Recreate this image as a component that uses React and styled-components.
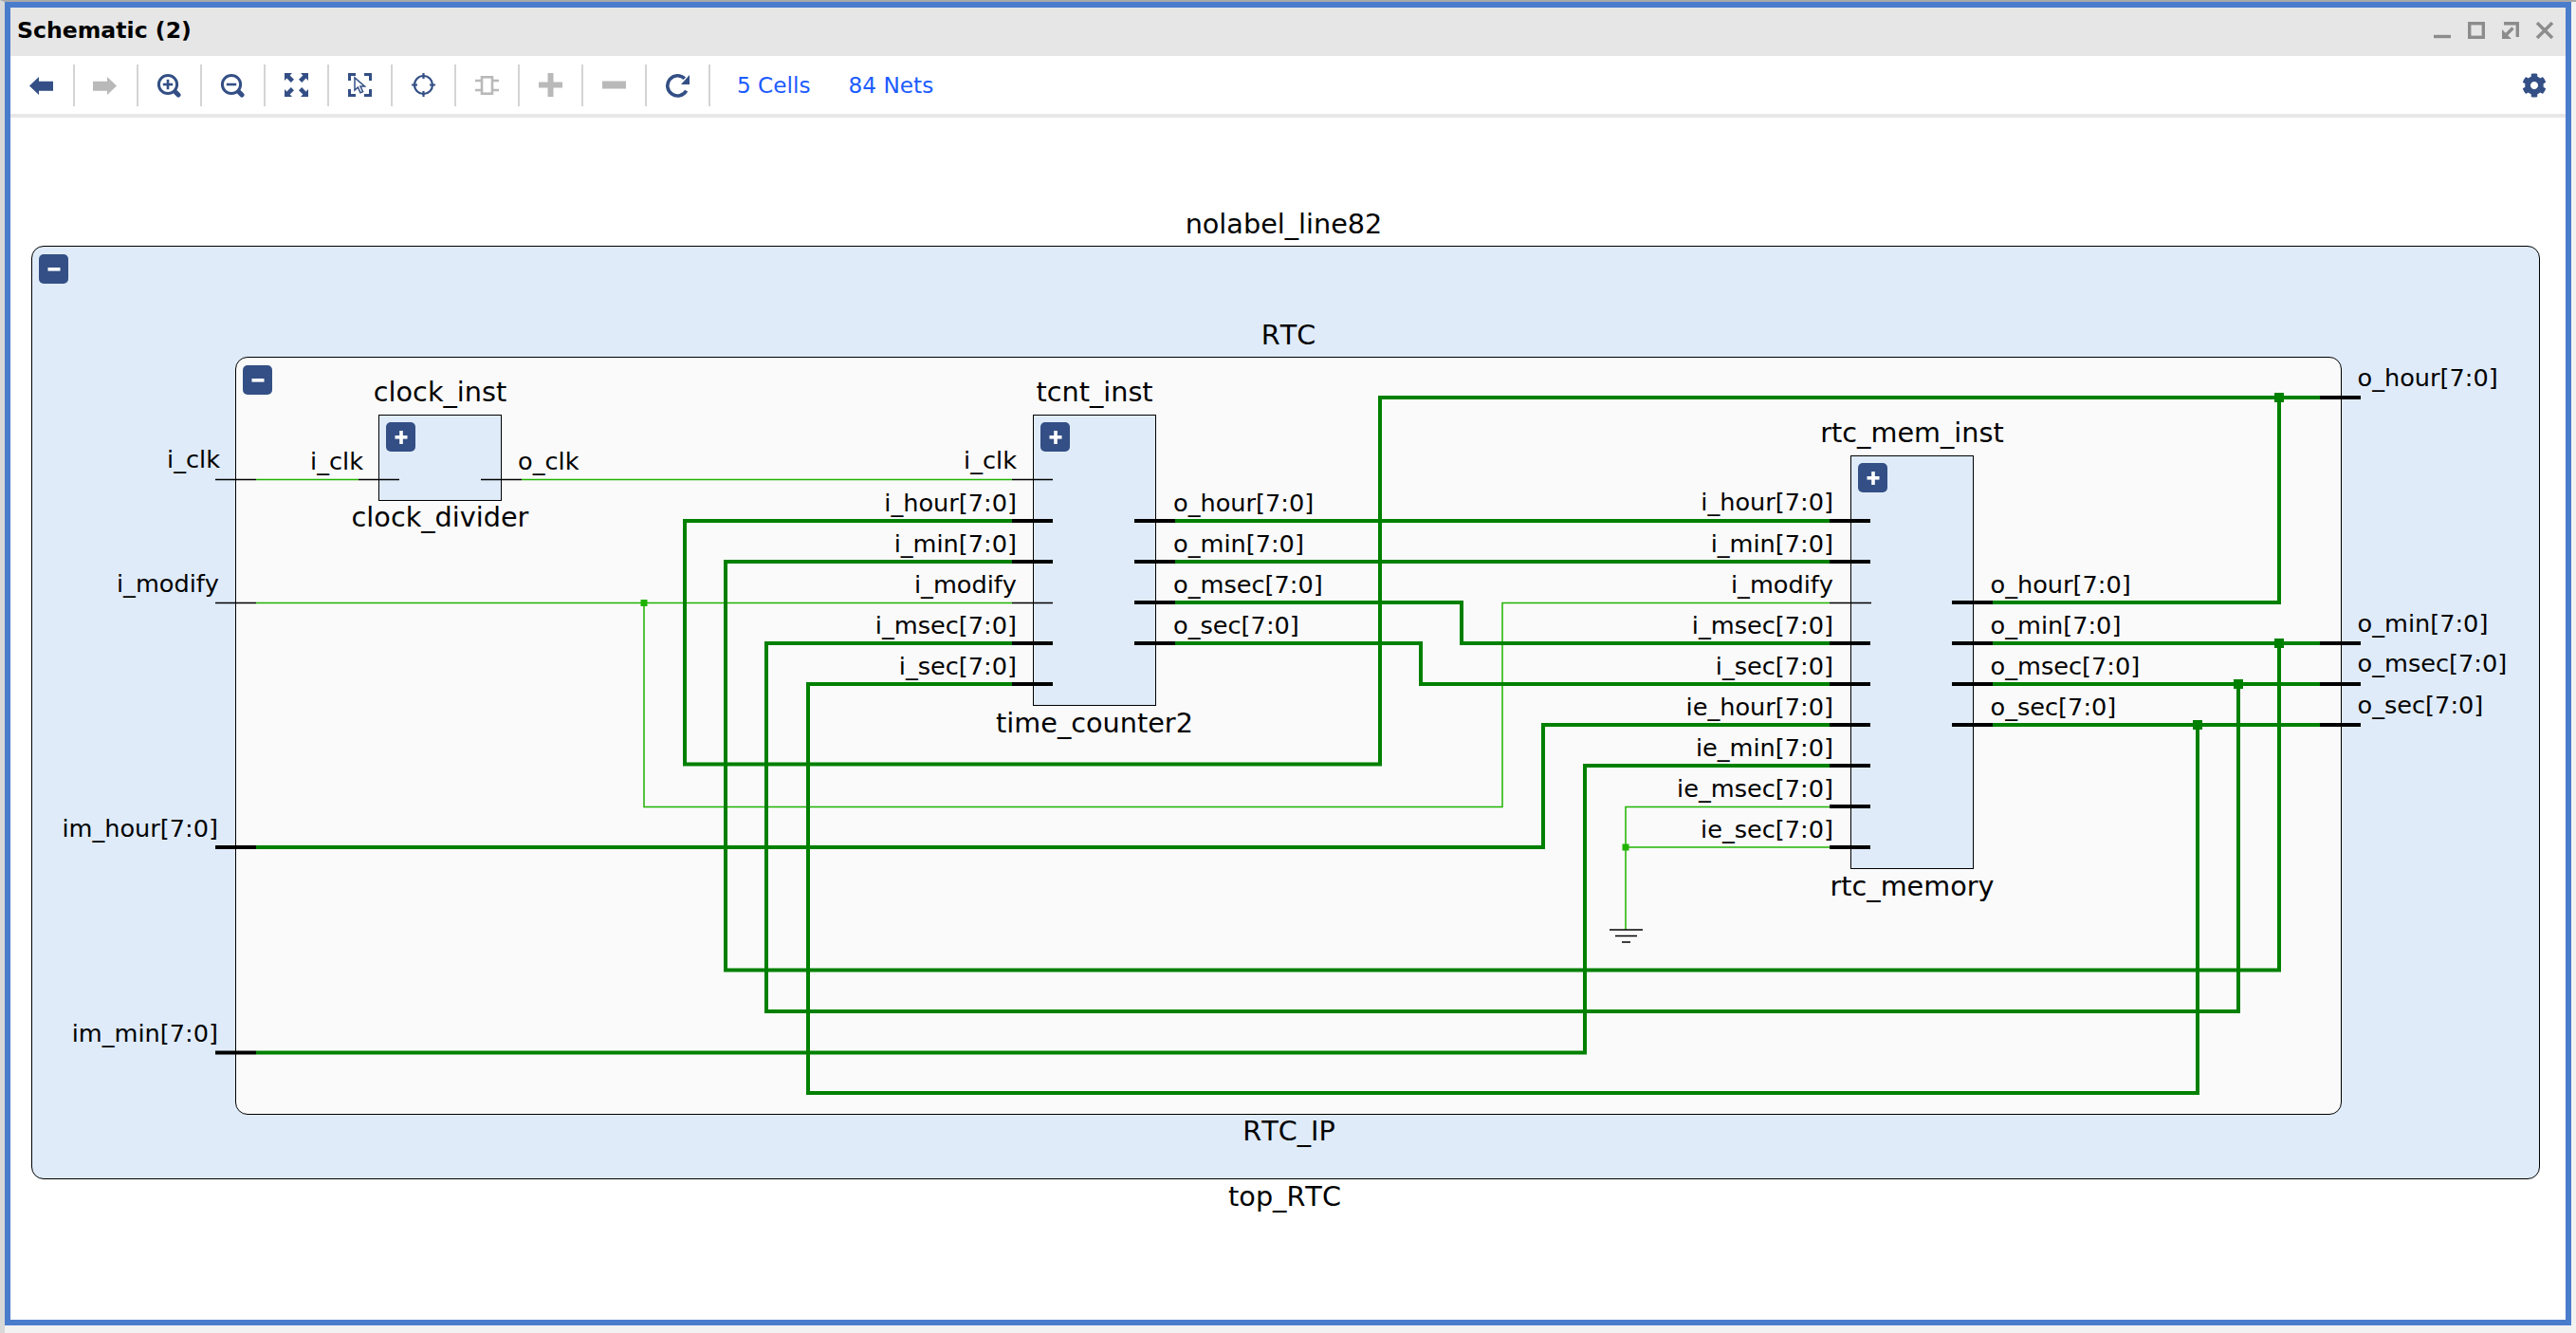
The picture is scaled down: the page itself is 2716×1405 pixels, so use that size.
import React from 'react'
import styled, { createGlobalStyle } from 'styled-components'
import { FaCog } from 'react-icons/fa'

const NAVY = '#334f85'
const GREY = '#b9b9b9'
const WINDOW_GREY = '#8c8c8c'
const THICK_GREEN = '#008000'
const THIN_GREEN = '#1fb300'
const BLOCK_BLUE = '#dfebf9'

// page coordinates of the canvas corner, all diagram data below is in page px
const OX = 11
const OY = 124

const PORT_SIZE = 25.6
const NAME_SIZE = 28.7

const GlobalStyle = createGlobalStyle`
    html, body {
        margin: 0;
        height: 100%;
        overflow: hidden;
        background: #f2f2f2;
    }
    * {
        box-sizing: border-box;
    }
`

const Page = styled.div`
    width: 100vw;
    height: 100vh;
    padding: 0 5px 8px 0;
    border-top: 2px solid #a9a9a9;
    border-left: 5px solid #d8d8d8;
    font-family: "DejaVu Sans", sans-serif;
`

const Window = styled.div`
    display: flex;
    flex-direction: column;
    height: 100%;
    border: 6px solid #4a7ccc;
    background: white;
`

const TitleBar = styled.div`
    display: flex;
    align-items: center;
    height: 51px;
    padding: 0 13px 3px 7px;
    background: #e6e6e6;
`

const Title = styled.div`
    flex: 1;
    font-size: 23.6px;
    font-weight: bold;
    color: black;
`

const WindowButton = styled.svg`
    width: 18px;
    height: 18px;
    margin-left: 18px;
    fill: none;
    stroke: ${WINDOW_GREY};
    stroke-width: 3.4;
`

const Toolbar = styled.div`
    display: flex;
    align-items: center;
    height: 61px;
    padding-left: 1px;
    background: white;
`

const ToolButton = styled.div`
    display: flex;
    align-items: center;
    justify-content: center;
    flex: none;
    width: 65px;
    height: 44px;
    padding-right: 1px;
    color: ${props => props.$disabled ? GREY : NAVY};
`

const Separator = styled.div`
    flex: none;
    width: 2px;
    height: 44px;
    background: #d4d4d4;
`

const StatLink = styled.span`
    margin-left: ${props => props.$gap}px;
    font-size: 23.2px;
    color: #1c5cff;
`

const GearButton = styled(ToolButton)`
    margin-left: auto;
    width: 66px;
`

const ToolbarRule = styled.div`
    flex: none;
    height: 4px;
    background: #e8e8e8;
`

const Canvas = styled.div`
    position: relative;
    flex: 1;
    overflow: hidden;
    background: white;
`

const Block = styled.div`
    position: absolute;
    left: ${props => props.$x - OX}px;
    top: ${props => props.$y - OY}px;
    width: ${props => props.$w}px;
    height: ${props => props.$h}px;
    border: 1px solid black;
    border-radius: ${props => props.$round ? 13 : 0}px;
    background: ${props => props.$fill};
`

const Toggle = styled.div`
    position: absolute;
    left: ${props => props.$left}px;
    top: ${props => props.$top}px;
    display: flex;
    align-items: center;
    justify-content: center;
    width: 31px;
    height: 31px;
    border-radius: 5px;
    background: ${NAVY};
`

const Wires = styled.svg`
    position: absolute;
    left: 0;
    top: 0;
    fill: none;
`

const Label = styled.span`
    position: absolute;
    left: ${props => props.$x - OX}px;
    top: ${props => props.$base - OY - props.$size * 0.846 + 0.6}px;
    font-size: ${props => props.$size}px;
    font-kerning: none;
    line-height: 1;
    white-space: nowrap;
    color: black;
    transform: translateX(${props => props.$align === 'right' ? '-100%' : props.$align === 'center' ? '-50%' : '0'});
`

function ToggleIcon({ plus }) {
    return (
        <svg width="16" height="16" viewBox="0 0 16 16" fill="white">
            <rect x="1.5" y="6" width="13" height="3.6" />
            {plus && <rect x="6.2" y="1" width="3.6" height="14" />}
        </svg>
    )
}

const BackIcon = () => (
    <svg width="26" height="26" viewBox="0 0 26 26" fill="currentColor">
        <path d="M0 13.5 L10 4 V8.7 H25 V18.7 H10 V23 Z" />
    </svg>
)

const ForwardIcon = () => (
    <svg width="26" height="26" viewBox="0 0 26 26" fill="currentColor">
        <path d="M25 13.5 L15 4 V8.7 H0 V18.7 H15 V23 Z" />
    </svg>
)

function ZoomIcon({ plus }) {
    return (
        <svg width="26" height="26" viewBox="0 0 26 26" fill="none" stroke="currentColor">
            <circle cx="12" cy="12" r="9.6" strokeWidth="3" />
            <path d="M6.8 12 H17.2" strokeWidth="2.6" />
            {plus && <path d="M12 6.8 V17.2" strokeWidth="2.6" />}
            <path d="M20.5 20.5 L23 23" strokeWidth="5" strokeLinecap="round" />
        </svg>
    )
}

const FitIcon = () => (
    <svg width="25" height="25" viewBox="0 0 25 25" fill="currentColor">
        {[0, 90, 180, 270].map(angle => (
            <path key={angle} transform={`rotate(${angle} 12.5 12.5)`} d="M0 0 H8 L5.6 2.4 L10 6.8 L6.8 10 L2.4 5.6 L0 8 Z" />
        ))}
    </svg>
)

const SelectIcon = () => (
    <svg width="25" height="25" viewBox="0 0 25 25" fill="none" stroke="currentColor">
        <path d="M1.5 8 V1.5 H8 M17 1.5 H23.5 V8 M23.5 17 V23.5 H17 M8 23.5 H1.5 V17" strokeWidth="3" />
        <path d="M7 5 V18 L10.4 15 L13 20.8 L15.6 19.6 L13 14 H17.5 Z" fill="white" strokeWidth="1.5" />
    </svg>
)

const CrosshairIcon = () => (
    <svg width="25" height="25" viewBox="0 0 25 25" fill="none" stroke="currentColor" strokeWidth="2.2">
        <circle cx="12.5" cy="12.5" r="9.5" />
        <path d="M12.5 0 V6 M12.5 19 V25 M0 12.5 H6 M19 12.5 H25" />
    </svg>
)

const CellIcon = () => (
    <svg width="25" height="20" viewBox="0 0 25 20" fill="none" stroke="currentColor" strokeWidth="2.6">
        <rect x="7" y="1.3" width="11" height="17.4" />
        <path d="M0 5 H7 M0 15 H7 M18 5 H25 M18 15 H25" />
    </svg>
)

const PlusIcon = () => (
    <svg width="25" height="25" viewBox="0 0 25 25" fill="currentColor">
        <rect x="0" y="9.5" width="25" height="6" />
        <rect x="9.5" y="0" width="6" height="25" />
    </svg>
)

const MinusIcon = () => (
    <svg width="25" height="25" viewBox="0 0 25 25" fill="currentColor">
        <rect x="0" y="8.5" width="25" height="8" />
    </svg>
)

const RefreshIcon = () => (
    <svg width="26" height="26" viewBox="0 0 26 26" fill="none" stroke="currentColor">
        <path d="M20.8 5.8 A10.6 10.6 0 1 0 22.6 18.6" strokeWidth="3.6" />
        <path d="M26 2 V12 H17 Z" fill="currentColor" stroke="none" />
    </svg>
)

const tools = [
    { icon: <BackIcon /> },
    { icon: <ForwardIcon />, disabled: true },
    { icon: <ZoomIcon plus /> },
    { icon: <ZoomIcon /> },
    { icon: <FitIcon /> },
    { icon: <SelectIcon /> },
    { icon: <CrosshairIcon /> },
    { icon: <CellIcon />, disabled: true },
    { icon: <PlusIcon />, disabled: true },
    { icon: <MinusIcon />, disabled: true },
    { icon: <RefreshIcon /> },
]

const thickNets = [
    'M1067 549 H722 V805.5 H1455 V419 H2446',
    'M2101 635 H2403 V419',
    'M2101 678 H2446',
    'M2403 678 V1022.5 H765 V592 H1067',
    'M2101 721 H2446',
    'M2360 721 V1066 H808 V678 H1067',
    'M2101 764 H2446',
    'M2317 764 V1152 H852 V721 H1067',
    'M1239 549 H1929',
    'M1239 592 H1929',
    'M1239 635 H1541 V678 H1929',
    'M1239 678 H1498 V721 H1929',
    'M270 893 H1627 V764 H1929',
    'M270 1109.5 H1671 V807 H1929',
]

const thinNets = [
    'M270 505.5 H378',
    'M550 505.5 H1067',
    'M270 635.5 H1067',
    'M679 635.5 V850.5 H1584 V635.5 H1929',
    'M1929 850.5 H1714 V980',
    'M1714 893 H1929',
]

// black pin stubs: [x start, x end, y]
const thickStubs = [
    ...[549, 592, 678, 721].map(y => [1067, 1110, y]),
    ...[549, 592, 635, 678].map(y => [1196, 1239, y]),
    ...[549, 592, 678, 721, 764, 807, 850, 893].map(y => [1929, 1972, y]),
    ...[635, 678, 721, 764].map(y => [2058, 2101, y]),
    ...[419, 678, 721, 764].map(y => [2446, 2489, y]),
    [227, 270, 893],
    [227, 270, 1109.5],
]

const thinStubs = [
    [227, 270, 505.5],
    [227, 270, 635.5],
    [378, 421, 505.5],
    [507, 550, 505.5],
    [1067, 1110, 505.5],
    [1067, 1110, 635.5],
    [1929, 1973, 635.5],
    [1697, 1732, 980],
    [1703, 1726, 986.5],
    [1710, 1719, 993],
]

const thickDots = [[2403, 419], [2403, 678], [2360, 721], [2317, 764]]
const thinDots = [[679, 635.5], [1714, 893]]

const nameLabels = [
    ['nolabel_line82', 1353.5, 246],
    ['RTC', 1358.5, 362.5],
    ['RTC_IP', 1359, 1202],
    ['top_RTC', 1354.5, 1271],
    ['clock_inst', 464, 422.7],
    ['clock_divider', 464, 555],
    ['tcnt_inst', 1154, 422.7],
    ['time_counter2', 1154, 771.7],
    ['rtc_mem_inst', 2016, 466],
    ['rtc_memory', 2016, 943.5],
]

const rightLabels = [
    ['i_clk', 232, 493],
    ['i_modify', 231, 624],
    ['im_hour[7:0]', 230, 881.6],
    ['im_min[7:0]', 230, 1098.5],
    ['i_clk', 383, 495],
    ['i_clk', 1072, 494],
    ['i_hour[7:0]', 1072, 539],
    ['i_min[7:0]', 1072, 582],
    ['i_modify', 1072, 625.5],
    ['i_msec[7:0]', 1072, 668],
    ['i_sec[7:0]', 1072, 711.5],
    ['i_hour[7:0]', 1933, 538],
    ['i_min[7:0]', 1933, 582],
    ['i_modify', 1933, 625],
    ['i_msec[7:0]', 1933, 668],
    ['i_sec[7:0]', 1933, 711.5],
    ['ie_hour[7:0]', 1933, 754],
    ['ie_min[7:0]', 1933, 797],
    ['ie_msec[7:0]', 1933, 840],
    ['ie_sec[7:0]', 1933, 883],
]

const leftLabels = [
    ['o_clk', 546, 495],
    ['o_hour[7:0]', 1237, 539],
    ['o_min[7:0]', 1237, 582],
    ['o_msec[7:0]', 1237, 625.5],
    ['o_sec[7:0]', 1237, 668],
    ['o_hour[7:0]', 2098.5, 625],
    ['o_min[7:0]', 2098.5, 668],
    ['o_msec[7:0]', 2098.5, 711],
    ['o_sec[7:0]', 2098.5, 754],
    ['o_hour[7:0]', 2485.5, 406.7],
    ['o_min[7:0]', 2485.5, 665.7],
    ['o_msec[7:0]', 2485.5, 708],
    ['o_sec[7:0]', 2485.5, 751.7],
]

function Schematic() {
    return (
        <Canvas>
            <Block $x={33} $y={259} $w={2645} $h={984} $fill={BLOCK_BLUE} $round>
                <Toggle $left={7} $top={8}><ToggleIcon /></Toggle>
            </Block>
            <Block $x={248} $y={376} $w={2221} $h={799} $fill="#fafafa" $round>
                <Toggle $left={7} $top={8}><ToggleIcon /></Toggle>
            </Block>
            <Block $x={399} $y={437} $w={130} $h={91} $fill={BLOCK_BLUE}>
                <Toggle $left={7} $top={7}><ToggleIcon plus /></Toggle>
            </Block>
            <Block $x={1089} $y={437} $w={130} $h={307} $fill={BLOCK_BLUE}>
                <Toggle $left={7} $top={7}><ToggleIcon plus /></Toggle>
            </Block>
            <Block $x={1951} $y={480} $w={130} $h={436} $fill={BLOCK_BLUE}>
                <Toggle $left={7} $top={7}><ToggleIcon plus /></Toggle>
            </Block>

            <Wires width="2694" height="1267" viewBox={`${OX} ${OY} 2694 1267`}>
                {thinNets.map(d => <path key={d} d={d} stroke={THIN_GREEN} strokeWidth="1.5" />)}
                {thickNets.map(d => <path key={d} d={d} stroke={THICK_GREEN} strokeWidth="4" />)}
                {thinStubs.map(([a, b, y]) => <path key={`${a}-${y}`} d={`M${a} ${y} H${b}`} stroke="black" strokeWidth="1.5" />)}
                {thickStubs.map(([a, b, y]) => <path key={`${a}-${y}`} d={`M${a} ${y} H${b}`} stroke="black" strokeWidth="4" />)}
                {thickDots.map(([x, y]) => <rect key={`${x}-${y}`} x={x - 5} y={y - 5} width="10" height="10" fill={THICK_GREEN} />)}
                {thinDots.map(([x, y]) => <rect key={`${x}-${y}`} x={x - 3.5} y={y - 3.5} width="7" height="7" fill={THIN_GREEN} />)}
            </Wires>

            {nameLabels.map(([text, x, base]) => (
                <Label key={`${text}-${x}`} $x={x} $base={base} $size={NAME_SIZE} $align="center">{text}</Label>
            ))}
            {rightLabels.map(([text, x, base]) => (
                <Label key={`${text}-${x}`} $x={x} $base={base} $size={PORT_SIZE} $align="right">{text}</Label>
            ))}
            {leftLabels.map(([text, x, base]) => (
                <Label key={`${text}-${x}`} $x={x} $base={base} $size={PORT_SIZE}>{text}</Label>
            ))}
        </Canvas>
    )
}

export default function App() {
    return (
        <Page>
            <GlobalStyle />
            <Window>
                <TitleBar>
                    <Title>Schematic (2)</Title>
                    <WindowButton viewBox="0 0 18 18">
                        <path d="M0 15.5 H18" />
                    </WindowButton>
                    <WindowButton viewBox="0 0 18 18">
                        <rect x="1.7" y="1.7" width="14.6" height="14.6" />
                    </WindowButton>
                    <WindowButton viewBox="0 0 18 18">
                        <path d="M2 1.7 H16.3 V16" />
                        <path d="M11.5 6.5 L4 14" />
                        <path d="M0 8 V18 H10 Z" fill={WINDOW_GREY} stroke="none" />
                    </WindowButton>
                    <WindowButton viewBox="0 0 18 18">
                        <path d="M1 1 L17 17 M17 1 L1 17" />
                    </WindowButton>
                </TitleBar>
                <Toolbar>
                    {tools.map((tool, i) => (
                        <React.Fragment key={i}>
                            <ToolButton $disabled={tool.disabled}>{tool.icon}</ToolButton>
                            <Separator />
                        </React.Fragment>
                    ))}
                    <StatLink $gap={28}>5 Cells</StatLink>
                    <StatLink $gap={40}>84 Nets</StatLink>
                    <GearButton><FaCog size={26} /></GearButton>
                </Toolbar>
                <ToolbarRule />
                <Schematic />
            </Window>
        </Page>
    )
}
